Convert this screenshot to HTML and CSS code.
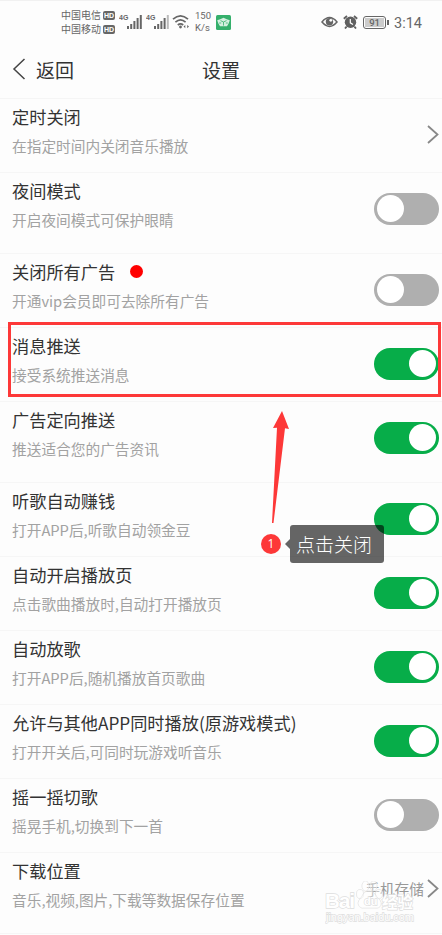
FILE: index.html
```html
<!DOCTYPE html>
<html lang="zh-CN">
<head>
    <meta charset="UTF-8">
    <meta name="viewport" content="width=device-width, initial-scale=1.0">
    <title>设置</title>
    <link rel="stylesheet" href="styles.css">
</head>
<body>
    <div class="status-bar">
        <div class="carriers">
            <div class="carrier">中国电信<span class="hd">HD</span></div>
            <div class="carrier">中国移动<span class="hd">HD</span></div>
        </div>
        <svg class="signal" width="24" height="18" viewBox="0 0 24 18">
            <text x="0" y="7" class="signal-text">4G</text>
            <path d="M9 13v3M12.2 11v5M15.4 8v8M18.6 5v11M21.8 2v14" stroke="#666" stroke-width="2"/>
        </svg>
        <svg class="signal" width="24" height="18" viewBox="0 0 24 18">
            <text x="0" y="7" class="signal-text">4G</text>
            <path d="M9 13v3M12.2 11v5M15.4 8v8M18.6 5v11" stroke="#666" stroke-width="2"/>
            <path d="M21.8 2v14" stroke="#bbb" stroke-width="2"/>
        </svg>
        <svg class="wifi" width="18" height="16" viewBox="0 0 18 16" fill="none" stroke="#666" stroke-width="1.7">
            <path d="M1 5.2Q8.5-1.6 16 5.2M3.4 8.2Q8.5 3.6 13.6 8.2M5.8 11Q8.5 8.6 11.2 11"/>
            <circle cx="8.5" cy="13" r="1.4" fill="#666" stroke="none"/>
            <path d="M11.5 12.6l1.8-1.6v3.2zM17 12.6l-1.8-1.6v3.2z" fill="#666" stroke="none"/>
        </svg>
        <div class="speed"><span>150</span><span>K/s</span></div>
        <svg class="app-icon" width="15" height="15" viewBox="0 0 15 15">
            <rect width="15" height="15" rx="1.5" fill="#35b06c"/>
            <path d="M1.2 5.2l3-1 3.3-1.4 3.3 1.4 3 1-1.2 3.2-1.6 2.8H4L2.4 8.4z" fill="#d5f0e0"/>
            <path d="M4.5 5.6L7.5 7l3-1.4M7.5 7v3.6M3.2 8h2M9.8 8h2" fill="none" stroke="#35b06c" stroke-width=".8"/>
        </svg>
        <div class="status-right">
            <svg width="17" height="12" viewBox="0 0 17 12">
                <path d="M1 6Q8.500-2.800 16 6Q8.500 14.800 1 6z" fill="none" stroke="#666" stroke-width="1.5"/>
                <circle cx="8.500" cy="5.800" r="3.700" fill="#666"/>
                <circle cx="9.800" cy="4.300" r="1.400" fill="#fff"/>
            </svg>
            <svg width="15" height="14" viewBox="0 0 15 14">
                <circle cx="7.500" cy="7.300" r="5.700" fill="#606060"/>
                <path d="M.8 3.800L4 1M14.200 3.800L11 1M3.600 11.600L2 13.500M11.400 11.600L13 13.500" stroke="#606060" stroke-width="1.800"/>
                <path d="M7.300 4v3.800l2.700 1.600" fill="none" stroke="#fff" stroke-width="1.200"/>
            </svg>
            <div class="battery"><span>91</span></div>
            <span class="time">3:14</span>
        </div>
    </div>

    <div class="header">
        <svg class="back" width="14" height="22" viewBox="0 0 14 22">
            <path d="M12.500 1L2 11l10.500 10" fill="none" stroke="#444" stroke-width="1.500"/>
        </svg>
        <span class="back-text">返回</span>
        <span class="header-title">设置</span>
    </div>

    <div class="settings">
        <div class="item">
            <div class="text">
                <div class="name">定时关闭</div>
                <div class="desc">在指定时间内关闭音乐播放</div>
            </div>
            <svg class="more" width="12" height="19" viewBox="0 0 12 19"><path d="M1 1l9.500 8.500L1 18"/></svg>
        </div>
        <div class="item last">
            <div class="text">
                <div class="name">夜间模式</div>
                <div class="desc">开启夜间模式可保护眼睛</div>
            </div>
            <div class="switch"></div>
        </div>
        <div class="item">
            <div class="text">
                <div class="name">关闭所有广告<span class="dot"></span></div>
                <div class="desc">开通vip会员即可去除所有广告</div>
            </div>
            <div class="switch"></div>
        </div>
        <div class="item">
            <div class="text">
                <div class="name">消息推送</div>
                <div class="desc">接受系统推送消息</div>
            </div>
            <div class="switch on"></div>
            <div class="highlight"></div>
        </div>
        <div class="item last">
            <div class="text">
                <div class="name">广告定向推送</div>
                <div class="desc">推送适合您的广告资讯</div>
            </div>
            <div class="switch on"></div>
        </div>
        <div class="item">
            <div class="text">
                <div class="name">听歌自动赚钱</div>
                <div class="desc">打开APP后,听歌自动领金豆</div>
            </div>
            <div class="switch on"></div>
        </div>
        <div class="item">
            <div class="text">
                <div class="name">自动开启播放页</div>
                <div class="desc">点击歌曲播放时,自动打开播放页</div>
            </div>
            <div class="switch on"></div>
        </div>
        <div class="item">
            <div class="text">
                <div class="name">自动放歌</div>
                <div class="desc">打开APP后,随机播放首页歌曲</div>
            </div>
            <div class="switch on"></div>
        </div>
        <div class="item">
            <div class="text">
                <div class="name">允许与其他APP同时播放(原游戏模式)</div>
                <div class="desc">打开开关后,可同时玩游戏听音乐</div>
            </div>
            <div class="switch on"></div>
        </div>
        <div class="item">
            <div class="text">
                <div class="name">摇一摇切歌</div>
                <div class="desc">摇晃手机,切换到下一首</div>
            </div>
            <div class="switch"></div>
        </div>
        <div class="item last">
            <div class="text">
                <div class="name">下载位置</div>
                <div class="desc">音乐,视频,图片,下载等数据保存位置</div>
            </div>
            <span class="value">手机存储</span>
            <svg class="more" width="12" height="19" viewBox="0 0 12 19"><path d="M1 1l9.500 8.500L1 18"/></svg>
        </div>
    </div>

    <!-- Guide arrow and tip -->
    <svg class="arrow" width="18" height="113" viewBox="0 0 18 113">
        <path d="M10 0L17 18L13 17.200L1.500 112H0L5 16.800L1 17z" fill="#fd3838"/>
    </svg>
    <div class="step">1</div>
    <div class="tip">点击关闭</div>

    <!-- Watermark -->
    <svg class="watermark" width="94" height="46" viewBox="0 0 94 46">
        <g class="wm">
            <g class="wm-paw">
                <ellipse cx="35" cy="13" rx="3.500" ry="4.500"/>
                <ellipse cx="40.500" cy="5" rx="3.500" ry="5"/>
                <ellipse cx="48.500" cy="5" rx="3.500" ry="5"/>
                <ellipse cx="54" cy="13" rx="3.500" ry="4.500"/>
                <path d="M44 10c-6 0-6 5-9 8-4 4-1 10 4 9h11c6 1 8-5 4-9-4-3-4-8-10-8z"/>
            </g>
            <text x="0" y="27" class="wm-big" textLength="30">Bai</text>
            <text x="39" y="24" class="wm-du">du</text>
            <text x="57" y="27" class="wm-cn" textLength="31">经验</text>
            <text x="1" y="40" class="wm-url" textLength="88">jingyan.baidu.com</text>
        </g>
    </svg>
</body>
</html>
```
FILE: styles.css
```css
* {
    box-sizing: border-box;
}
body {
    position: relative;
    margin: 0;
    height: 935px;
    overflow: hidden;
    background: #fdfdfd;
    border-top: 1px solid #f1f1f1;
    color: #333;
    font-family: "Noto Sans CJK SC", sans-serif;
}
.status-bar {
    display: flex;
    align-items: center;
    height: 42px;
    padding: 0 20px 0 61px;
    color: #666;
}
.carriers {
    width: 58px;
}
.carrier {
    display: flex;
    align-items: center;
    gap: 2px;
    height: 14px;
    font-size: 10px;
    line-height: 14px;
    white-space: nowrap;
}
.hd {
    width: 12px;
    height: 9px;
    border-radius: 2px;
    background: #666;
    color: #fff;
    font: bold 7px/9px "Liberation Sans", sans-serif;
    text-align: center;
}
.signal {
    margin-right: 3px;
}
.signal-text {
    fill: #666;
    font: bold 7px "Liberation Sans", sans-serif;
}
.wifi {
    margin: 0 5px 0 -1px;
}
.speed {
    display: flex;
    flex-direction: column;
    width: 17px;
    font: 9.5px/12px Roboto, sans-serif;
}
.app-icon {
    margin-left: 4px;
}
.status-right {
    display: flex;
    align-items: center;
    gap: 5px;
    margin-left: auto;
}
.battery {
    position: relative;
    width: 23px;
    height: 13px;
    padding: 1px;
    border: 1px solid #666;
    border-radius: 3px;
    font: 500 9.5px/9px Roboto, sans-serif;
    text-align: center;
}
.battery span {
    display: block;
    background: #ccc;
}
.battery::after {
    content: "";
    position: absolute;
    right: -4px;
    top: 3px;
    width: 2px;
    height: 5px;
    background: #666;
}
.time {
    margin: 3px 0 0 3px;
    font: 14.5px/16px Roboto, sans-serif;
}
.header {
    position: relative;
    display: flex;
    align-items: center;
    height: 56px;
    padding: 0 0 3px 12px;
    border-bottom: 1px solid #f5f5f5;
    font-size: 19px;
}
.back-text {
    margin-left: 10px;
}
.header-title {
    position: absolute;
    left: 0;
    right: 0;
    text-align: center;
}
.item {
    position: relative;
    display: flex;
    align-items: center;
    height: 74px;
    padding: 0 3px 2px 12px;
    border-bottom: 1px solid #f6f6f6;
}
.item.last {
    height: 81px;
    padding-bottom: 9px;
}
.text {
    flex: 1;
    white-space: nowrap;
}
.name {
    display: flex;
    align-items: center;
    height: 30px;
    margin-top: -8px;
    font-size: 17.2px;
}
.desc {
    height: 28px;
    color: #a2a2a2;
    font-size: 14.7px;
    line-height: 28px;
}
.dot {
    width: 13px;
    height: 13px;
    margin-left: 15px;
    border-radius: 50%;
    background: #f00;
}
.switch {
    width: 65px;
    height: 32px;
    padding: 2px 3px;
    border-radius: 16px;
    background: #afafaf;
}
.switch::before {
    content: "";
    display: block;
    width: 27px;
    height: 27px;
    border-radius: 50%;
    background: #fff;
}
.switch.on {
    background: #07ad49;
}
.switch.on::before {
    margin-left: auto;
}
.more {
    fill: none;
    stroke: #888;
    stroke-width: 1.8;
}
.value {
    margin-right: 3px;
    color: #999;
    font-size: 14.7px;
}
.highlight {
    position: absolute;
    left: 8px;
    top: -6px;
    width: 433px;
    height: 75px;
    border: 3px solid #fd3838;
}
.arrow {
    position: absolute;
    left: 272px;
    top: 410px;
}
.step {
    position: absolute;
    left: 261px;
    top: 533px;
    width: 20px;
    height: 20px;
    border-radius: 50%;
    background: #fd3838;
    color: #fff;
    font: 12px/20px "Open Sans", sans-serif;
    text-align: center;
}
.tip {
    position: absolute;
    left: 290px;
    top: 524px;
    width: 94px;
    height: 38px;
    padding-left: 6px;
    border-radius: 3px;
    background: rgba(0, 0, 0, 0.6);
    color: #fff;
    font-size: 19px;
    font-weight: 300;
    line-height: 38px;
}
.tip::before {
    content: "";
    position: absolute;
    left: -5px;
    top: 14px;
    border: 5px solid transparent;
    border-left: 0;
    border-right-color: rgba(0, 0, 0, 0.6);
}
.watermark {
    position: absolute;
    left: 325px;
    top: 880px;
}
.wm {
    fill: #fff;
    stroke: #dedede;
    stroke-width: 1.3;
    paint-order: stroke;
}
.wm-paw {
    fill-opacity: 0.4;
    stroke-width: 0.8;
}
.wm-big {
    font: bold 21px "Liberation Sans", sans-serif;
}
.wm-du {
    font: bold 11px "Liberation Sans", sans-serif;
}
.wm-cn {
    font: bold 15.5px "Noto Sans CJK SC", sans-serif;
}
.wm-url {
    font: 11px "Liberation Sans", sans-serif;
}
```
